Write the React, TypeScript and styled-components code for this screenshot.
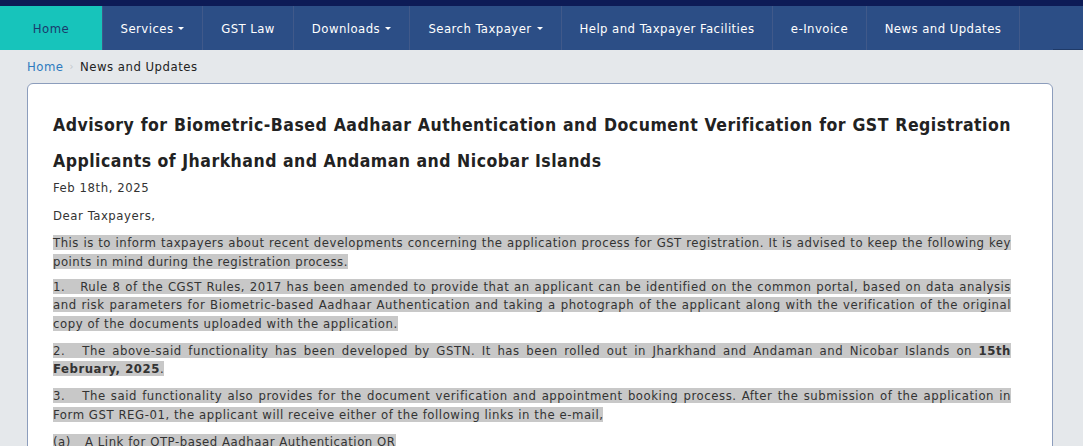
import React from 'react';
import styled, { createGlobalStyle } from 'styled-components';

const GlobalStyle = createGlobalStyle`
  html, body {
    margin: 0;
    padding: 0;
    background: #e5e8eb;
    font-family: "DejaVu Sans Condensed", "DejaVu Sans", sans-serif;
    color: #333;
  }
`;

interface NavItem {
  label: string;
  width: number;
  caret?: boolean;
}

const navItems: NavItem[] = [
  { label: 'Home', width: 103 },
  { label: 'Services', width: 100, caret: true },
  { label: 'GST Law', width: 91 },
  { label: 'Downloads', width: 116, caret: true },
  { label: 'Search Taxpayer', width: 152, caret: true },
  { label: 'Help and Taxpayer Facilities', width: 211 },
  { label: 'e-Invoice', width: 94 },
  { label: 'News and Updates', width: 153 },
];

const TopStrip = styled.div`
  height: 6px;
  background: #0d1b56;
`;

const NavBar = styled.nav`
  display: flex;
  height: 44px;
  background: #2c4e86;
`;

const NavLink = styled.a<{ $active?: boolean; $width: number }>`
  display: flex;
  align-items: center;
  justify-content: center;
  gap: 5px;
  width: ${(p) => p.$width}px;
  box-sizing: border-box;
  border-right: 1px solid #40598a;
  background: ${(p) => (p.$active ? '#17c4bb' : 'transparent')};
  color: ${(p) => (p.$active ? '#1b3a6d' : '#ffffff')};
  font-size: 13px;
  letter-spacing: 0.45px;
  white-space: nowrap;
  cursor: pointer;
`;

const Caret = styled.span`
  width: 0;
  height: 0;
  margin-top: 1px;
  border-left: 3px solid transparent;
  border-right: 3px solid transparent;
  border-top: 3px solid #ffffff;
`;

const NavFiller = styled.div`
  flex: 1;
  display: flex;
  justify-content: flex-end;
  align-items: flex-end;
`;

const FillerLine = styled.div`
  width: 30px;
  height: 1px;
  background: #1f3a68;
`;

const Breadcrumb = styled.div`
  display: flex;
  align-items: center;
  gap: 6px;
  height: 32px;
  padding: 0 27px;
  font-size: 13px;
  letter-spacing: 0.5px;
`;

const CrumbLink = styled.a`
  color: #2e7bbf;
`;

const CrumbSep = styled.span`
  color: #c3c7cc;
  font-size: 11px;
`;

const CrumbCurrent = styled.span`
  color: #222;
`;

const Card = styled.article`
  margin: 1px 30px 0 27px;
  background: #fff;
  border: 1px solid #8c9dbc;
  border-radius: 6px;
  padding: 23px 41px 20px 25px;
`;

const Title = styled.h4`
  margin: 0;
  font-size: 17.5px;
  font-weight: bold;
  letter-spacing: 0.5px;
  line-height: 36px;
  text-align: justify;
  color: #222;
`;

const Para = styled.p<{ $tight?: boolean }>`
  margin: 0 0 ${(p) => (p.$tight ? 6.5 : 8.5)}px;
  font-size: 13px;
  letter-spacing: ${(p) => (p.$tight ? 0.5 : 0.55)}px;
  line-height: 18.5px;
  text-align: justify;
`;

const DateLine = styled(Para)`
  margin-bottom: 9px;
`;

const Mark = styled.span`
  background: #c8c8c8;
`;

const Gap = styled.span<{ $w?: number }>`
  display: inline-block;
  width: ${(p) => p.$w ?? 17}px;
`;

export default function App() {
  return (
    <>
      <GlobalStyle />
      <TopStrip />
      <NavBar>
        {navItems.map((item, i) => (
          <NavLink key={item.label} $width={item.width} $active={i === 0}>
            {item.label}
            {item.caret && <Caret />}
          </NavLink>
        ))}
        <NavFiller>
          <FillerLine />
        </NavFiller>
      </NavBar>
      <Breadcrumb>
        <CrumbLink>Home</CrumbLink>
        <CrumbSep>›</CrumbSep>
        <CrumbCurrent>News and Updates</CrumbCurrent>
      </Breadcrumb>
      <Card>
        <Title>
          Advisory for Biometric-Based Aadhaar Authentication and Document Verification for GST
          Registration Applicants of Jharkhand and Andaman and Nicobar Islands
        </Title>
        <DateLine>Feb 18th, 2025</DateLine>
        <DateLine>Dear Taxpayers,</DateLine>
        <Para $tight>
          <Mark>
            This is to inform taxpayers about recent developments concerning the application
            process for GST registration. It is advised to keep the following key points in mind
            during the registration process.
          </Mark>
        </Para>
        <Para>
          <Mark>
            1.<Gap $w={15} />Rule 8 of the CGST Rules, 2017 has been amended to provide that an
            applicant can be identified on the common portal, based on data analysis and risk
            parameters for Biometric-based Aadhaar Authentication and taking a photograph of the
            applicant along with the verification of the original copy of the documents uploaded
            with the application.
          </Mark>
        </Para>
        <Para>
          <Mark>
            2.<Gap />The above-said functionality has been developed by GSTN. It has been rolled
            out in Jharkhand and Andaman and Nicobar Islands on <b>15th February, 2025</b>.
          </Mark>
        </Para>
        <Para>
          <Mark>
            3.<Gap />The said functionality also provides for the document verification and
            appointment booking process. After the submission of the application in Form GST
            REG-01, the applicant will receive either of the following links in the e-mail,
          </Mark>
        </Para>
        <Para>
          <Mark>
            (a)<Gap $w={14} />A Link for OTP-based Aadhaar Authentication OR
          </Mark>
        </Para>
      </Card>
    </>
  );
}
